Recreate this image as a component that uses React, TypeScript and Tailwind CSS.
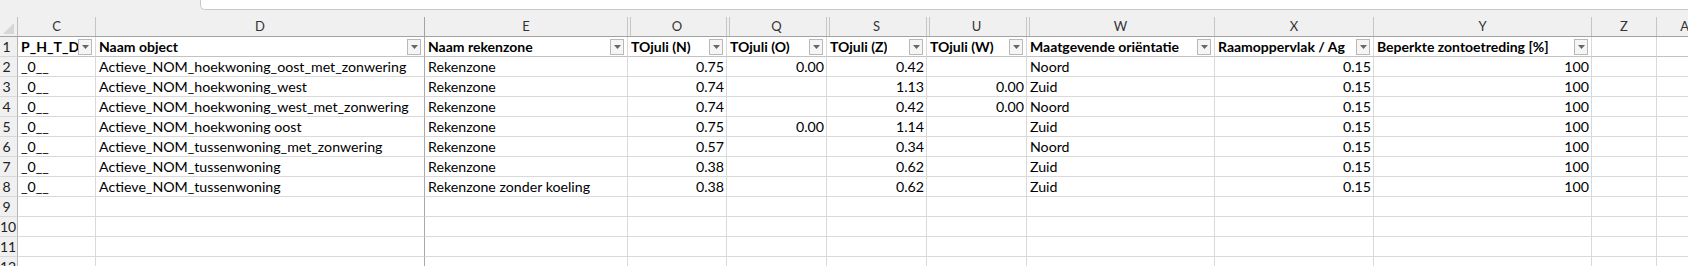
type Col = {
  id: string;
  w: string;
  title?: string;
  right?: boolean;
  hiddenBefore?: boolean;
  freeze?: boolean;
};

const columns: Col[] = [
  { id: "C", w: "w-[78px]", title: "P_H_T_D" },
  { id: "D", w: "w-[329px]", title: "Naam object", freeze: true },
  { id: "E", w: "w-[203px]", title: "Naam rekenzone" },
  { id: "O", w: "w-[99px]", title: "TOjuli (N)", right: true, hiddenBefore: true },
  { id: "Q", w: "w-[100px]", title: "TOjuli (O)", right: true, hiddenBefore: true },
  { id: "S", w: "w-[100px]", title: "TOjuli (Z)", right: true, hiddenBefore: true },
  { id: "U", w: "w-[100px]", title: "TOjuli (W)", right: true, hiddenBefore: true },
  { id: "W", w: "w-[188px]", title: "Maatgevende oriëntatie", hiddenBefore: true },
  { id: "X", w: "w-[159px]", title: "Raamoppervlak / Ag", right: true },
  { id: "Y", w: "w-[218px]", title: "Beperkte zontoetreding [%]", right: true },
  { id: "Z", w: "w-[65px]" },
  { id: "AA", w: "w-[65px]" },
];

const data: string[][] = [
  ["_0__", "Actieve_NOM_hoekwoning_oost_met_zonwering", "Rekenzone", "0.75", "0.00", "0.42", "", "Noord", "0.15", "100"],
  ["_0__", "Actieve_NOM_hoekwoning_west", "Rekenzone", "0.74", "", "1.13", "0.00", "Zuid", "0.15", "100"],
  ["_0__", "Actieve_NOM_hoekwoning_west_met_zonwering", "Rekenzone", "0.74", "", "0.42", "0.00", "Noord", "0.15", "100"],
  ["_0__", "Actieve_NOM_hoekwoning oost", "Rekenzone", "0.75", "0.00", "1.14", "", "Zuid", "0.15", "100"],
  ["_0__", "Actieve_NOM_tussenwoning_met_zonwering", "Rekenzone", "0.57", "", "0.34", "", "Noord", "0.15", "100"],
  ["_0__", "Actieve_NOM_tussenwoning", "Rekenzone", "0.38", "", "0.62", "", "Zuid", "0.15", "100"],
  ["_0__", "Actieve_NOM_tussenwoning", "Rekenzone zonder koeling", "0.38", "", "0.62", "", "Zuid", "0.15", "100"],
];

function FilterButton() {
  return (
    <span className="mr-[3px] ml-auto flex h-[16px] w-[14px] shrink-0 items-center justify-center border border-[#b9b9b9] bg-[#f5f5f5]">
      <svg width="7" height="4" viewBox="0 0 7 4">
        <path d="M0 0h7L3.5 4z" fill="#666" />
      </svg>
    </span>
  );
}

function RowHead({ n }: { n: number }) {
  return (
    <div className="flex w-[18px] shrink-0 items-center border-r border-b border-r-[#b5b5b5] border-b-[#d9d9d9] bg-[#f0f0f0] text-[14px] leading-[19px] text-[#222]">
      <span className="w-[13px] text-center whitespace-nowrap">{n}</span>
    </div>
  );
}

function cellBorder(c: Col) {
  return c.freeze ? "border-r border-b border-r-[#a9a9a9] border-b-[#d9d9d9]" : "border-r border-b border-[#d9d9d9]";
}

export default function App() {
  return (
    <div className="h-[266px] w-[1688px] overflow-hidden bg-white font-['Lato',sans-serif] text-black">
      {/* formula bar edge */}
      <div className="h-[17px] bg-[#f0f0f0]">
        <div className="ml-[200px] h-[10px] rounded-bl-[5px] border-b border-l border-[#c8c8c8] bg-white" />
      </div>

      {/* column letters */}
      <div className="flex h-[20px] border-b border-[#a3a3a3] bg-[#f0f0f0]">
        <div className="relative w-[18px] shrink-0 border-r border-[#bdbdbd]">
          <svg className="absolute right-[3px] bottom-[2px]" width="11" height="11" viewBox="0 0 11 11">
            <path d="M11 0v11H0z" fill="#d6d6d6" />
          </svg>
        </div>
        {columns.map((c) => (
          <div
            key={c.id}
            className={`${c.w} shrink-0 overflow-hidden whitespace-nowrap border-r text-center text-[13px] leading-[19px] text-[#333] ${c.freeze ? "border-[#a3a3a3]" : "border-[#c6c6c6]"} ${c.hiddenBefore ? "shadow-[inset_2px_0_0_#f0f0f0,inset_3px_0_0_#c6c6c6]" : ""}`}
          >
            {c.id}
          </div>
        ))}
      </div>

      {/* table header row */}
      <div className="flex h-[20px]">
        <RowHead n={1} />
        {columns.map((c) => (
          <div
            key={c.id}
            className={`${c.w} flex shrink-0 items-center border-r border-b ${c.freeze ? "border-r-[#a9a9a9]" : "border-r-[#d9d9d9]"} border-b-[#c2c2c2] text-[14px] leading-[19px] font-bold`}
          >
            {c.title && (
              <>
                <span className="overflow-hidden whitespace-nowrap pl-[3px]">{c.title}</span>
                <FilterButton />
              </>
            )}
          </div>
        ))}
      </div>

      {data.map((row, i) => (
        <div key={i} className="flex h-[20px]">
          <RowHead n={i + 2} />
          {columns.map((c, j) => (
            <div
              key={c.id}
              className={`${c.w} shrink-0 overflow-hidden whitespace-nowrap ${cellBorder(c)} text-[14.2px] leading-[19px] ${c.right ? "pr-[2px] text-right" : "pl-[3px]"}`}
            >
              {row[j] ?? ""}
            </div>
          ))}
        </div>
      ))}

      {[9, 10, 11, 12].map((n) => (
        <div key={n} className="flex h-[20px]">
          <RowHead n={n} />
          {columns.map((c) => (
            <div key={c.id} className={`${c.w} shrink-0 ${cellBorder(c)}`} />
          ))}
        </div>
      ))}
    </div>
  );
}
